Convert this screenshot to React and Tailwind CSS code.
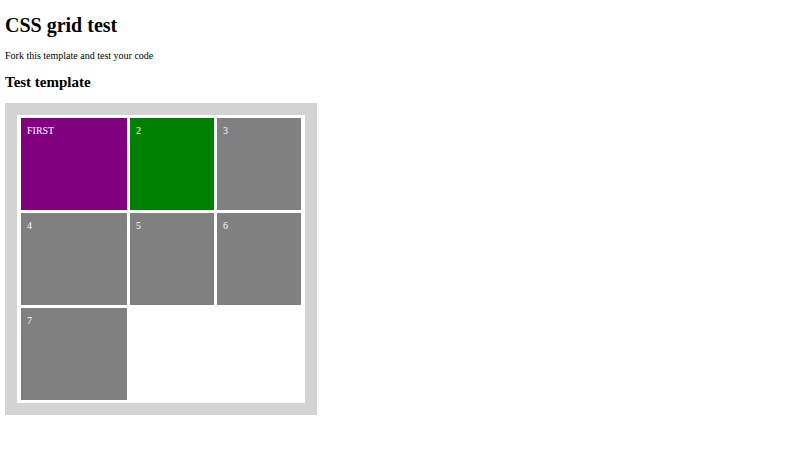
const cells = [
  { label: "FIRST", bg: "bg-[#800080]" },
  { label: "2", bg: "bg-[#008000]" },
  { label: "3", bg: "bg-[#808080]" },
  { label: "4", bg: "bg-[#808080]" },
  { label: "5", bg: "bg-[#808080]" },
  { label: "6", bg: "bg-[#808080]" },
  { label: "7", bg: "bg-[#808080]" },
];

export default function App() {
  return (
    <div className="min-h-screen bg-white px-[5px] pt-[14px] text-black font-['Liberation_Serif',serif]">
      <h1 className="text-[20px] font-bold leading-[23px]">CSS grid test</h1>
      <p className="mt-[13px] text-[10px] leading-[12px]">Fork this template and test your code</p>
      <h2 className="mt-[12px] text-[15px] font-bold leading-[17px]">Test template</h2>

      <div className="mt-[12px] w-[312px] bg-[#d3d3d3] p-[12px]">
        <div className="grid grid-cols-[106px_84px_84px] auto-rows-[92px] gap-[3px] bg-white px-[4px] py-[3px]">
          {cells.map((c) => (
            <div key={c.label} className={`${c.bg} px-[6px] pt-[7px] text-[10px] leading-[12px] text-white`}>
              {c.label}
            </div>
          ))}
        </div>
      </div>
    </div>
  );
}
